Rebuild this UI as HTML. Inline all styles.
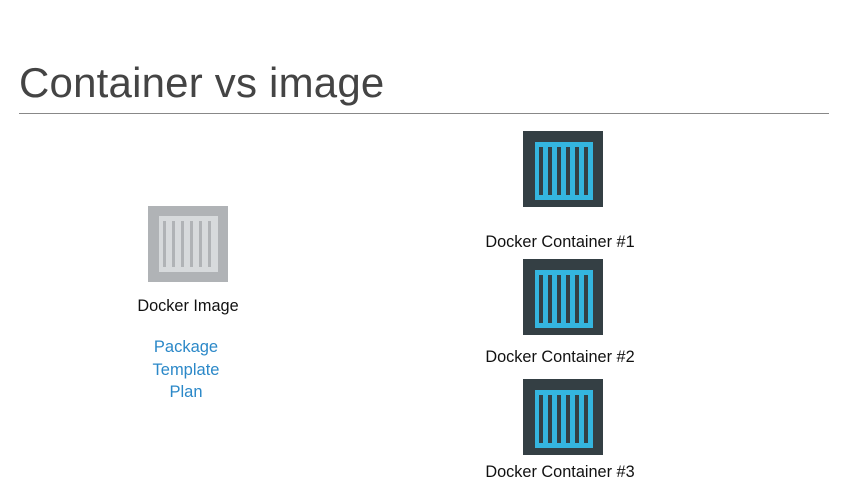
<!DOCTYPE html><html><head><style>
body{margin:0;width:847px;height:483px;background:#fff;font-family:"Liberation Sans",sans-serif;position:relative;overflow:hidden}
.t{position:absolute;left:19px;top:58px;font-size:42px;color:#444;line-height:50px;letter-spacing:0.2px}
.hr{position:absolute;left:19px;top:113px;width:810px;height:1px;background:#888}
.i{position:absolute}
.l{position:absolute;font-size:16.3px;color:#111;width:200px;text-align:center}
.b{position:absolute;font-size:16.5px;color:#2b88c8;width:200px;text-align:center;line-height:22.5px}
</style></head><body>
<div class="t">Container vs image</div><div class="hr"></div>
<svg class="i" style="left:148px;top:206px" width="80" height="76"><rect width="80" height="76" fill="#b0b3b6"/><rect x="11" y="10" width="59" height="56" fill="#d7dadc"/><g fill="#b0b3b6"><rect x="15" y="15" width="3" height="46"/><rect x="24" y="15" width="3" height="46"/><rect x="33" y="15" width="3" height="46"/><rect x="42" y="15" width="3" height="46"/><rect x="51" y="15" width="3" height="46"/><rect x="60" y="15" width="3" height="46"/><rect x="66" y="15" width="0" height="46"/></g></svg>
<div class="l" style="left:88px;top:297px">Docker Image</div>
<div class="b" style="left:86px;top:336px">Package<br>Template<br>Plan</div>
<svg width="0" height="0"><defs><g id="c"><rect width="80" height="76" fill="#343f44"/><rect x="12" y="11" width="58" height="58" fill="#34b5df"/><g fill="#343f44"><rect x="16" y="16" width="4" height="48"/><rect x="25" y="16" width="4" height="48"/><rect x="34" y="16" width="4" height="48"/><rect x="43" y="16" width="4" height="48"/><rect x="52" y="16" width="4" height="48"/><rect x="61" y="16" width="4" height="48"/></g></g></defs></svg>
<svg class="i" style="left:523px;top:131px" width="80" height="76"><use href="#c"/></svg>
<svg class="i" style="left:523px;top:259px" width="80" height="76"><use href="#c"/></svg>
<svg class="i" style="left:523px;top:379px" width="80" height="76"><use href="#c"/></svg>
<div class="l" style="left:460px;top:233px">Docker Container #1</div>
<div class="l" style="left:460px;top:348px">Docker Container #2</div>
<div class="l" style="left:460px;top:463px">Docker Container #3</div>
</body></html>
